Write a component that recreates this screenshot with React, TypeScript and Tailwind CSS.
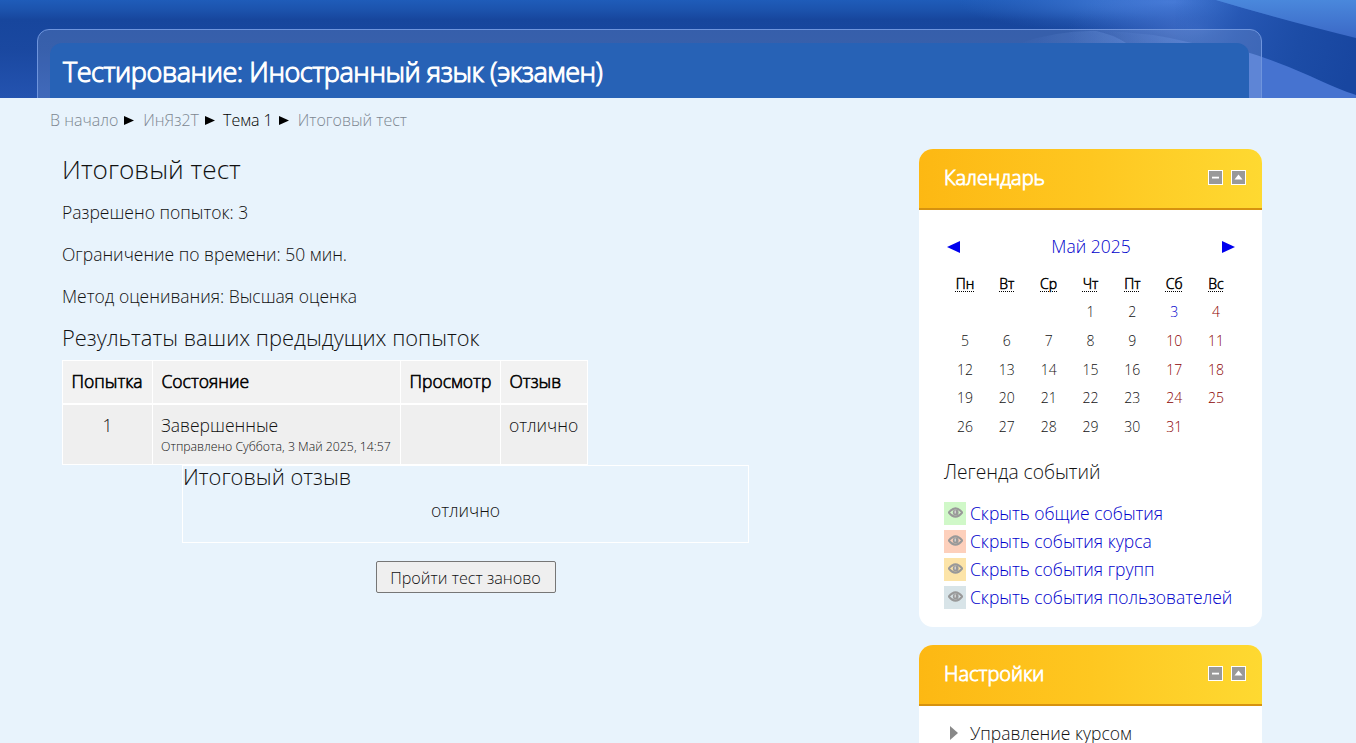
import type { ReactNode } from "react";

const weekDays = ["Пн", "Вт", "Ср", "Чт", "Пт", "Сб", "Вс"];
const days: (number | null)[] = [null, null, null, ...Array.from({ length: 31 }, (_, i) => i + 1), null];

const legend = [
  { label: "Скрыть общие события", color: "bg-[#d0f8c8]" },
  { label: "Скрыть события курса", color: "bg-[#fdd0bc]" },
  { label: "Скрыть события групп", color: "bg-[#fce4a8]" },
  { label: "Скрыть события пользователей", color: "bg-[#d8e4e8]" },
];

function dayColor(day: number | null, index: number) {
  if (day === 3) return "text-[#0000cc]";
  return index % 7 > 4 ? "text-[#8b0000]" : "text-[#111111]";
}

function HeaderArt() {
  return (
    <svg className="absolute inset-0 h-[98px] w-[1356px]" viewBox="0 0 1356 98" preserveAspectRatio="none">
      <defs>
        <linearGradient id="base" x1="0" y1="0" x2="0" y2="1">
          <stop offset="0" stopColor="#1f5cb9" />
          <stop offset="0.1" stopColor="#1c53ad" />
          <stop offset="0.2" stopColor="#17469d" />
          <stop offset="0.5" stopColor="#1a48a0" />
          <stop offset="1" stopColor="#2453b0" />
        </linearGradient>
        <radialGradient id="glow" cx="0.5" cy="0.5" r="0.5">
          <stop offset="0" stopColor="#4a82de" />
          <stop offset="0.35" stopColor="#4078d4" stopOpacity="0.75" />
          <stop offset="1" stopColor="#2f66c4" stopOpacity="0" />
        </radialGradient>
        <radialGradient id="glowLow" cx="0.5" cy="0.5" r="0.5">
          <stop offset="0" stopColor="#4470cc" stopOpacity="0.8" />
          <stop offset="1" stopColor="#3a68c6" stopOpacity="0" />
        </radialGradient>
        <linearGradient id="band" gradientUnits="userSpaceOnUse" x1="1175" y1="0" x2="1356" y2="50">
          <stop offset="0" stopColor="#2b62bd" stopOpacity="0" />
          <stop offset="0.35" stopColor="#2455b2" stopOpacity="0.85" />
          <stop offset="0.7" stopColor="#1c4ca6" />
          <stop offset="1" stopColor="#1846a0" />
        </linearGradient>
        <linearGradient id="corner" x1="0" y1="0" x2="0" y2="1">
          <stop offset="0" stopColor="#4a88dc" />
          <stop offset="1" stopColor="#3b68c6" />
        </linearGradient>
        <linearGradient id="streak" x1="0" y1="0" x2="1" y2="0">
          <stop offset="0" stopColor="#5f8ee4" stopOpacity="0" />
          <stop offset="1" stopColor="#5f8ee4" stopOpacity="0.35" />
        </linearGradient>
      </defs>
      <rect width="1356" height="98" fill="url(#base)" />
      <ellipse cx="1172" cy="2" rx="215" ry="34" fill="url(#glow)" />
      <ellipse cx="1198" cy="28" rx="130" ry="50" fill="url(#glowLow)" />
      <path d="M1175 0H1216Q1290 22 1356 38V98L1310 76Q1260 54 1175 40Z" fill="url(#band)" />
      <path d="M1216 0H1356V38Q1290 22 1216 0Z" fill="url(#corner)" />
      <path d="M1240 98V50Q1275 60 1310 76Q1340 90 1356 95V98Z" fill="#4673d0" />
      <path d="M1020 43Q1060 30 1096 31Q1112 34 1126 43Z" fill="url(#streak)" />
      <path d="M1100 31Q1150 32 1192 43H1124Q1115 36 1100 31Z" fill="url(#streak)" />
    </svg>
  );
}

function BlockHeader({ title }: { title: string }) {
  return (
    <div className="flex h-[61px] items-center justify-between rounded-t-[14px] border-b-2 border-[#d6920f] bg-linear-to-r from-[#fdb813] via-[#fec720] to-[#fed931] pr-4 pl-[25px]">
      <h2 className="pb-[2px] text-[20px] leading-6 text-white [-webkit-text-stroke:0.9px_white]">{title}</h2>
      <div className="flex gap-2 pb-[2px]">
        <svg className="size-[15px]" viewBox="0 0 15 15">
          <rect x="0.5" y="0.5" width="14" height="14" fill="#999" stroke="#fff" />
          <rect x="4" y="6.7" width="7" height="1.8" fill="#fff" />
        </svg>
        <svg className="size-[15px]" viewBox="0 0 15 15">
          <rect x="0.5" y="0.5" width="14" height="14" fill="#999" stroke="#fff" />
          <path d="M7.5 4.5L11.5 9.5H3.5Z" fill="#fff" />
        </svg>
      </div>
    </div>
  );
}

function EyeIcon() {
  return (
    <svg className="h-[11px] w-[15px]" viewBox="0 0 15 11">
      <path d="M0.9 5.5Q7.5 -2.8 14.1 5.5Q7.5 13.8 0.9 5.5Z" fill="none" stroke="#999" strokeWidth="2.1" />
      <circle cx="7.7" cy="5.5" r="2.9" fill="#999" />
      <path d="M7.2 3.4V6.4" stroke="#e4e4e4" strokeWidth="1.1" />
    </svg>
  );
}

function Cell({ className, children }: { className: string; children?: ReactNode }) {
  return <td className={`border border-white px-2 ${className}`}>{children}</td>;
}

function Arrow() {
  return (
    <svg className="mr-1 ml-[6px] mt-[7px] h-[9px] w-[10px]" viewBox="0 0 10 9">
      <path d="M0 0L10 4.5L0 9Z" fill="#000" />
    </svg>
  );
}

export default function App() {
  return (
    <div className="h-[743px] w-[1356px] overflow-hidden bg-[#e8f3fc] font-['Open_Sans',sans-serif] text-[17.5px] font-light text-[#111111]">
      <header className="relative h-[98px] overflow-hidden">
        <HeaderArt />
        <div className="relative ml-[37px] pt-[29px]">
          <div className="h-[80px] w-[1225px] rounded-t-[12px] border border-[#6f95dd] bg-white/13 px-3 pt-[13px]">
            <div className="flex h-[66px] rounded-t-[12px] bg-[#2762b6] pt-[11px] pl-[13px]">
              <h1 className="text-[27px] leading-9 tracking-[-0.44px] whitespace-nowrap text-white [-webkit-text-stroke:1.1px_white]">
                Тестирование: Иностранный язык (экзамен)
              </h1>
            </div>
          </div>
        </div>
      </header>

      <nav className="flex h-[51px] items-start pt-[11px] pl-[50px] text-[16px] leading-[22px] whitespace-nowrap text-[#7d8791]">
        <span>В начало</span>
        <Arrow />
        <span className="ml-[5px]">ИнЯз2Т</span>
        <Arrow />
        <span className="ml-1 text-black">Тема 1</span>
        <Arrow />
        <span className="ml-[5px]">Итоговый тест</span>
      </nav>

      <div className="flex">
        <main className="ml-[62px] w-[807px]">
          <h2 className="pt-[2px] text-[26.2px] leading-9">Итоговый тест</h2>
          <div className="mt-1 leading-[42px]">
            <p>Разрешено попыток: 3</p>
            <p>Ограничение по времени: 50 мин.</p>
            <p>Метод оценивания: Высшая оценка</p>
          </div>
          <h3 className="mt-[6px] text-[21.87px] leading-[30px]">Результаты ваших предыдущих попыток</h3>
          <table className="mt-[7px] w-[525px] table-fixed border-collapse bg-[#efefef]">
            <colgroup>
              <col className="w-[90px]" />
              <col className="w-[248px]" />
              <col className="w-[100px]" />
              <col className="w-[87px]" />
            </colgroup>
            <thead>
              <tr className="h-[43px] bg-[#f2f2f2] text-left text-black [-webkit-text-stroke:0.6px_black]">
                {["Попытка", "Состояние", "Просмотр", "Отзыв"].map((h) => (
                  <th key={h} className="border border-b-2 border-white pr-1 pb-[2px] pl-[8.5px] font-light whitespace-nowrap">{h}</th>
                ))}
              </tr>
            </thead>
            <tbody>
              <tr className="h-[61px] align-top">
                <Cell className="pt-2 text-center leading-[25px]">1</Cell>
                <Cell className="pt-2">
                  <div className="leading-[25px]">Завершенные</div>
                  <div className="text-[12.3px] leading-[18px] whitespace-nowrap">Отправлено Суббота, 3 Май 2025, 14:57</div>
                </Cell>
                <Cell className="" />
                <Cell className="pt-2 leading-[25px]">отлично</Cell>
              </tr>
            </tbody>
          </table>
          <section className="mx-auto h-[78px] w-[567px] border border-white">
            <h3 className="text-[21.9px] leading-[22px]">Итоговый отзыв</h3>
            <p className="mt-[9px] text-center leading-[26px]">отлично</p>
          </section>
          <button className="mx-auto mt-[18px] block h-8 w-[180px] rounded-[2px] border border-[#767676] bg-[#efefef] pt-[2px] text-[16.2px] leading-6 whitespace-nowrap">
            Пройти тест заново
          </button>
        </main>

        <aside className="ml-[50px] w-[343px]">
          <section className="h-[478px] rounded-[14px] bg-white">
            <BlockHeader title="Календарь" />
            <div className="px-[25px]">
              <div className="flex items-center justify-between pt-[24px] text-[#0000cc]">
                <svg className="mt-px ml-[3px] h-[12px] w-[13px]" viewBox="0 0 13 12"><path d="M13 0V12L0 6Z" fill="#0000ee" /></svg>
                <span className="leading-6">Май 2025</span>
                <svg className="mt-px mr-[2px] h-[12px] w-[13px]" viewBox="0 0 13 12"><path d="M0 0V12L13 6Z" fill="#0000ee" /></svg>
              </div>
              <div className="mt-[15px] grid grid-cols-7 text-center text-[14px]">
                {weekDays.map((d) => (
                  <div key={d} className="h-[25px] leading-[22px] text-black">
                    <span className="underline decoration-dotted decoration-1 underline-offset-2 [-webkit-text-stroke:0.5px_black]">{d}</span>
                  </div>
                ))}
                {days.map((d, i) => (
                  <div key={i} className={`h-[28.75px] leading-[28px] ${dayColor(d, i)}`}>{d}</div>
                ))}
              </div>
              <h3 className="mt-[15px] text-[19.2px] leading-[30px]">Легенда событий</h3>
              <ul className="mt-[13px]">
                {legend.map((item) => (
                  <li key={item.label} className="flex h-7 items-center whitespace-nowrap">
                    <span className={`mr-1 flex h-[23px] w-[22px] items-center justify-center pb-[2px] ${item.color}`}>
                      <EyeIcon />
                    </span>
                    <span className="pb-[2px] leading-[26px] text-[#0000cc]">{item.label}</span>
                  </li>
                ))}
              </ul>
            </div>
          </section>
          <section className="mt-[18px] rounded-t-[14px] bg-white">
            <BlockHeader title="Настройки" />
            <div className="flex items-center pt-[17px] pl-[31px]">
              <svg className="h-[14px] w-2" viewBox="0 0 8 14"><path d="M0 0L8 7L0 14Z" fill="#888" /></svg>
              <span className="ml-3 leading-5">Управление курсом</span>
            </div>
          </section>
        </aside>
      </div>
    </div>
  );
}
